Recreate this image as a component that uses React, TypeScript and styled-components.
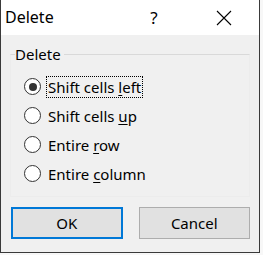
import React from "react";
import styled, { createGlobalStyle } from "styled-components";

const Global = createGlobalStyle`
  html, body { margin: 0; padding: 0; background: #f7f7f7; }
  body { font-family: "Noto Sans", "Open Sans", "Liberation Sans", sans-serif; color: #000; }
`;

const Window = styled.div`
  width: 258px;
  height: 252px;
  border-left: 1px solid #3a3a3a;
  border-right: 1px solid #3a3a3a;
  border-bottom: 1px solid #3a3a3a;
  background: #f0f0f0;
  display: flex;
  flex-direction: column;
`;

const TitleBar = styled.div`
  height: 35px;
  background: #fff;
  display: flex;
  align-items: center;
  padding-left: 4px;
  box-sizing: border-box;
`;

const Title = styled.div`
  font-size: 16px;
  flex: 1;
  padding-bottom: 2px;
`;

const TitleButton = styled.div<{ $w: number }>`
  width: ${(p) => p.$w}px;
  height: 35px;
  display: flex;
  align-items: center;
  justify-content: center;
  font-size: 17px;
`;

const Body = styled.div`
  flex: 1;
  display: flex;
  flex-direction: column;
  padding: 9px 9px 0 9px;
`;

const Group = styled.fieldset`
  margin: 0;
  padding: 12px 0 12px 13px;
  border: 1px solid #ececec;
  border-top-color: #d9d9d9;
  display: flex;
  flex-direction: column;
  gap: 8px;
`;

const Legend = styled.legend`
  font-size: 15px;
  padding: 0 3px 0 0;
  margin-left: -9px;
`;

const Option = styled.label`
  display: flex;
  align-items: center;
  height: 21px;
  font-size: 15px;
  line-height: 20px;
`;

const Circle = styled.span<{ $checked?: boolean }>`
  width: 17px;
  height: 17px;
  box-sizing: border-box;
  border: 1px solid #333;
  border-radius: 50%;
  background: #fff;
  display: flex;
  align-items: center;
  justify-content: center;
  margin-right: 6px;
  &::after {
    content: "";
    width: 8px;
    height: 8px;
    border-radius: 50%;
    background: ${(p) => (p.$checked ? "#333" : "transparent")};
  }
`;

const Text = styled.span<{ $focus?: boolean }>`
  padding: 0 1px;
  outline: ${(p) => (p.$focus ? "1px dotted #000" : "none")};
  outline-offset: 0px;
  line-height: 20px;
`;

const U = styled.span`
  text-decoration: underline;
  text-underline-offset: 2px;
`;

const Buttons = styled.div`
  display: flex;
  gap: 16px;
  margin-top: 10px;
  padding-left: 1px;
`;

const Button = styled.div<{ $default?: boolean }>`
  width: 112px;
  height: 32px;
  box-sizing: border-box;
  background: #e1e1e1;
  border: ${(p) => (p.$default ? "2px solid #0078d7" : "1px solid #adadad")};
  display: flex;
  align-items: center;
  justify-content: center;
  font-size: 15px;
`;

const options: { pre: string; key: string; post: string; checked?: boolean }[] = [
  { pre: "Shift cells ", key: "l", post: "eft", checked: true },
  { pre: "Shift cells ", key: "u", post: "p" },
  { pre: "Entire ", key: "r", post: "ow" },
  { pre: "Entire ", key: "c", post: "olumn" },
];

export default function App() {
  return (
    <>
      <Global />
      <Window>
        <TitleBar>
          <Title>Delete</Title>
          <TitleButton $w={70}>?</TitleButton>
          <TitleButton $w={70}>
            <svg width="16" height="16" viewBox="0 0 16 16">
              <path d="M1 1 L15 15 M15 1 L1 15" stroke="#000" strokeWidth="1.1" fill="none" />
            </svg>
          </TitleButton>
        </TitleBar>
        <Body>
          <Group>
            <Legend>Delete</Legend>
            {options.map((o, i) => (
              <Option key={i}>
                <Circle $checked={o.checked} />
                <Text $focus={o.checked}>
                  {o.pre}
                  <U>{o.key}</U>
                  {o.post}
                </Text>
              </Option>
            ))}
          </Group>
          <Buttons>
            <Button $default>OK</Button>
            <Button>Cancel</Button>
          </Buttons>
        </Body>
      </Window>
    </>
  );
}
